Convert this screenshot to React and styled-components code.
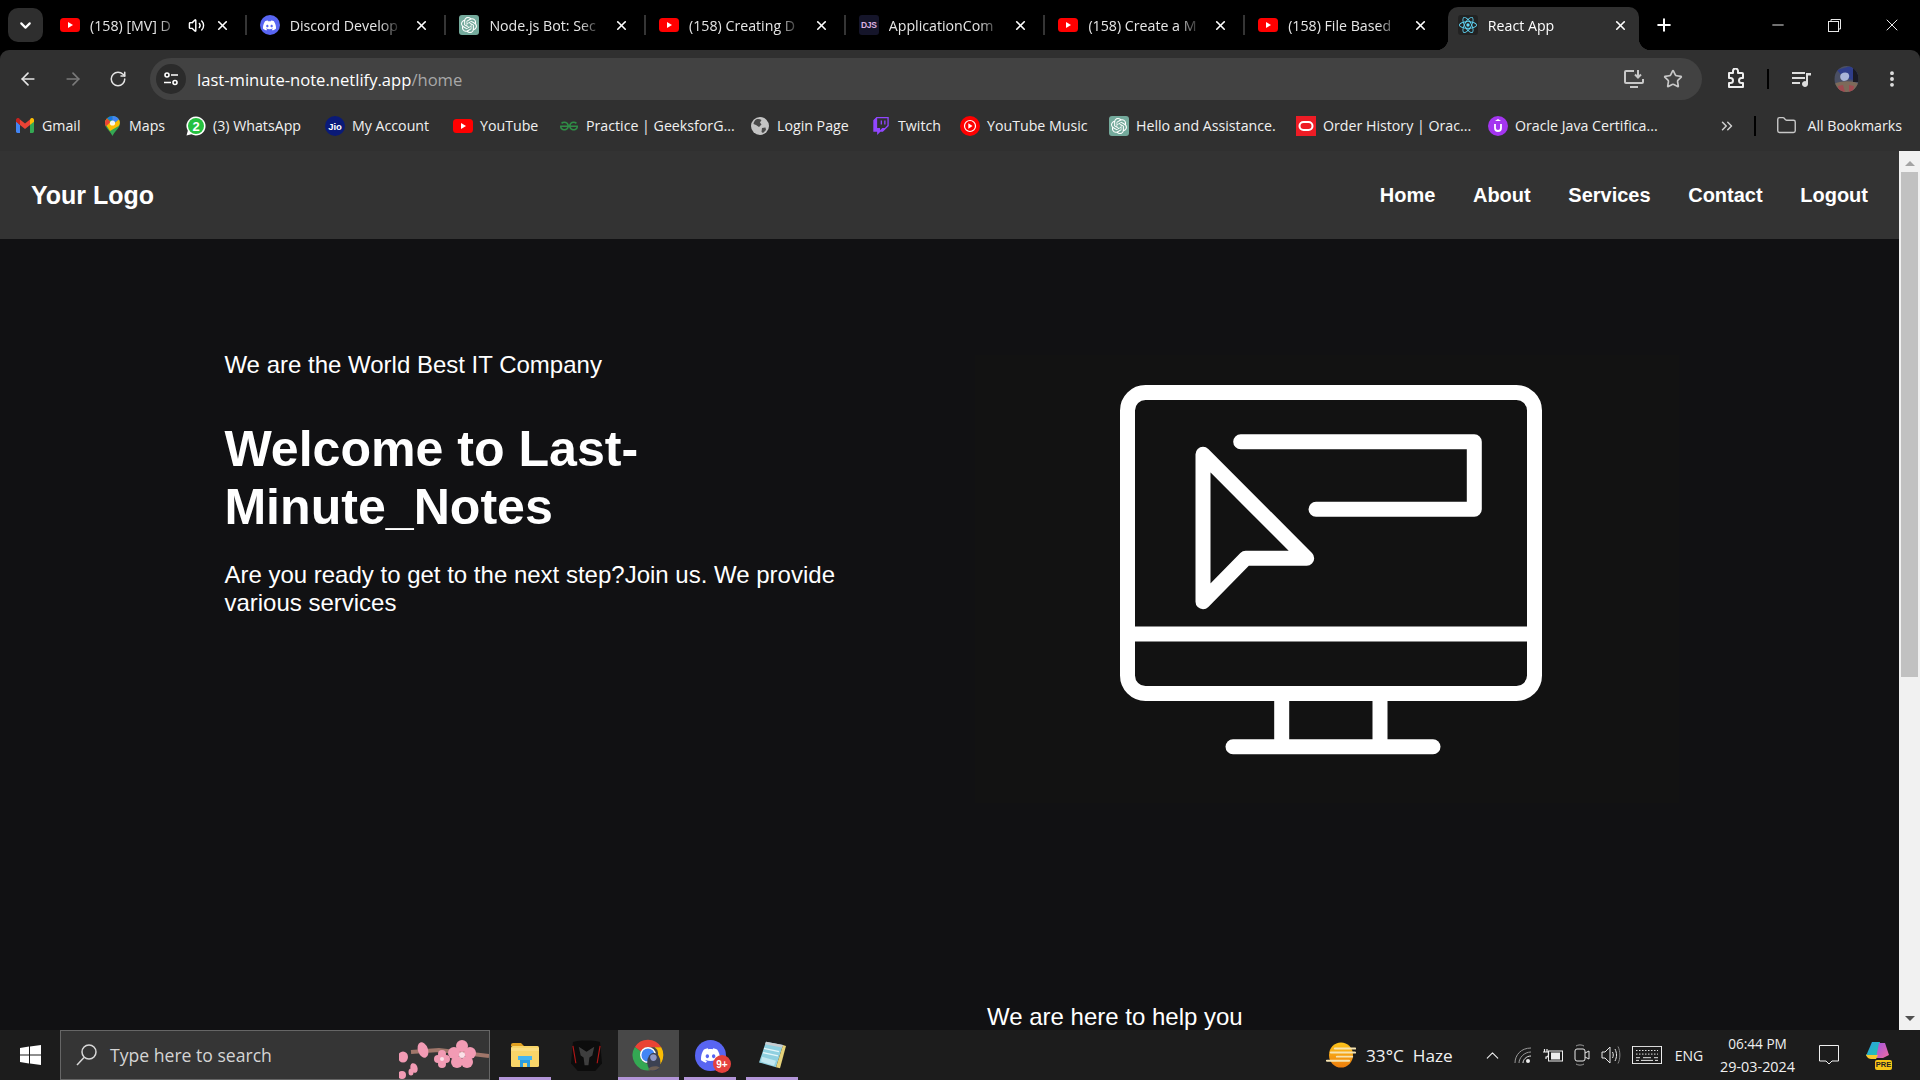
import React from "react";
import styled, { createGlobalStyle } from "styled-components";
import { ArrowLeft, ArrowRight, RotateCw, Star, EllipsisVertical, ChevronDown, ChevronUp, ChevronsRight, Plus, X, Minus, Volume2, Folder } from "lucide-react";
import { SiDiscord, SiOpenai, SiTwitch, SiGeeksforgeeks, SiReact } from "react-icons/si";

const Global = createGlobalStyle`
  html, body { margin: 0; padding: 0; background: #000; overflow: hidden; }
  * { box-sizing: border-box; }
`;

const UI = `"Open Sans", "Noto Sans", sans-serif`;
const WEB = `"Liberation Sans", Arial, sans-serif`;

const Screen = styled.div`
  width: 1920px; height: 1080px; display: flex; flex-direction: column; overflow: hidden; background: #000;
`;

/* ---------- tab strip ---------- */
const TabStrip = styled.div`
  height: 50px; flex: none; display: flex; align-items: center; padding-left: 8px; background: #000; color: #fff;
`;
const TabListButton = styled.div`
  width: 35px; height: 34px; margin-right: 5px; flex: none; display: flex; align-items: center; justify-content: center;
  background: #2e2e2e; border-radius: 10px; color: #fff;
`;
const Tab = styled.div`
  position: relative; width: 199.7px; height: 50px; flex: none; display: flex; align-items: center; padding: 0 17.5px 0 12px;
  font: 14.2px ${UI}; color: ${p => (p.$active ? "#fff" : "#e6e6e6")};
  &::after {
    content: ""; display: ${p => (p.$last ? "none" : "block")}; position: absolute; right: 1px; top: 15px; width: 2px; height: 20px; background: #353535;
  }
`;
const ActiveShape = styled.div`
  position: absolute; left: 2px; right: 6.7px; top: 7px; bottom: 0; background: #303030; border-radius: 10px 10px 0 0;
  &::before, &::after {
    content: ""; position: absolute; bottom: 0; width: 12px; height: 12px;
  }
  &::before { left: -12px; background: radial-gradient(circle at 0 0, transparent 12px, #303030 12.5px); }
  &::after { right: -12px; background: radial-gradient(circle at 100% 0, transparent 12px, #303030 12.5px); }
`;
const FavSlot = styled.span`
  position: relative; width: 20px; height: 20px; flex: none; margin-right: 10px; display: flex; align-items: center; justify-content: center;
`;
const TabTitle = styled.span`
  position: relative; flex: 1; min-width: 0; overflow: hidden; white-space: nowrap;
  -webkit-mask-image: linear-gradient(to right, #000 calc(100% - 22px), transparent 100%);
  mask-image: linear-gradient(to right, #000 calc(100% - 22px), transparent 100%);
`;
const AudioSlot = styled.span`
  position: relative; flex: none; display: flex; align-items: center; justify-content: center; width: 20px; margin: 0 -4px 0 6px; color: #fff;
`;
const CloseSlot = styled.span`
  position: relative; flex: none; display: flex; align-items: center; justify-content: center; width: 16px; margin-left: 12px; color: #fff;
`;
const NewTab = styled.div`
  width: 36px; flex: none; display: flex; justify-content: center; color: #fff;
`;
const WindowControls = styled.div`
  margin-left: auto; display: flex; color: #e8e8e8;
`;
const WindowButton = styled.div`
  width: 57px; display: flex; justify-content: center; align-items: center;
`;

/* ---------- toolbar ---------- */
const Chrome = styled.div`
  flex: none; background: #303030; border-radius: 9px 9px 0 0; color: #fff;
`;
const Toolbar = styled.div`
  height: 58px; display: flex; align-items: center; padding-left: 5px;
`;
const ToolSlot = styled.div`
  width: ${p => p.$w}px; flex: none; display: flex; align-items: center; justify-content: center; color: ${p => p.$color || "#e4e4e4"};
`;
const AddressBar = styled.div`
  width: 1551.6px; height: 42px; flex: none; margin: 0 14.4px 0 10px; display: flex; align-items: center; padding: 0 19px 0 6px; border-radius: 21px; background: #424242;
`;
const SiteButton = styled.div`
  width: 30px; height: 30px; flex: none; border-radius: 50%; background: #2b2b2b; display: flex; align-items: center; justify-content: center; margin-right: 11px;
`;
const Url = styled.div`
  flex: 1; font: 16.6px ${UI}; color: #fff; white-space: nowrap;
`;
const UrlPath = styled.span`
  color: #a8a8a8;
`;
const AddressActions = styled.div`
  display: flex; align-items: center; gap: 18px; color: #c8c8c8;
`;
const ToolDivider = styled.div`
  width: 2px; height: 20px; background: #000;
`;
const Bookmarks = styled.div`
  height: 43px; padding: 0 0 8px 15px; display: flex; align-items: center; font: 14.2px ${UI}; color: #f0f0f0;
`;
const BookmarkItem = styled.div`
  width: ${p => p.$w}px; flex: none; display: flex; align-items: center; white-space: nowrap;
`;
const BookmarkIcon = styled.span`
  width: 20px; height: 20px; flex: none; margin-right: 7px; display: flex; align-items: center; justify-content: center;
`;
const BookmarkEnd = styled.div`
  margin-left: auto; display: flex; align-items: center; padding-right: 18px;
`;
const BookmarkOverflow = styled.div`
  width: 30px; display: flex; justify-content: center; color: #d0d0d0;
`;
const BookmarkDivider = styled.div`
  width: 2px; height: 20px; background: #000; margin: 0 20px 0 12px;
`;
const AllBookmarks = styled.div`
  display: flex; align-items: center; gap: 10px; color: #c8c8c8;
`;
const AllLabel = styled.span`
  color: #f0f0f0;
`;

/* ---------- viewport ---------- */
const Viewport = styled.div`
  flex: 1; min-height: 0; display: flex; background: #111113;
`;
const Page = styled.div`
  flex: 1; min-width: 0; overflow: hidden; font-family: ${WEB}; color: #fff;
`;
const Navbar = styled.nav`
  height: 88px; display: flex; align-items: center; justify-content: space-between; padding: 0 31px; background: #333;
`;
const Logo = styled.div`
  font-size: 25px; font-weight: 700;
`;
const NavLinks = styled.div`
  display: flex; gap: 37.6px; font-size: 20px; font-weight: 700;
`;
const Hero = styled.section`
  display: flex; align-items: flex-start; padding: 112px 0 0 224.4px;
`;
const HeroText = styled.div`
  width: 627px; flex: none;
`;
const Eyebrow = styled.p`
  margin: 0; font-size: 24px;
`;
const Headline = styled.h1`
  margin: 41px 0 0; font-size: 50.1px; line-height: 58px; font-weight: 700;
`;
const Lead = styled.p`
  margin: 25px 0 0; font-size: 24px; line-height: 28px;
`;
const HeroArt = styled.svg`
  flex: none; margin: 4px 0 0 123.600px; display: block; background: #121212;
`;
const HelpSection = styled.section`
  padding: 199.500px 0 0 987px;
`;
const HelpLine = styled.p`
  margin: 0; font-size: 24px; white-space: nowrap;
`;
const Scrollbar = styled.div`
  width: 21px; flex: none; background: #f1f1f1; display: flex; flex-direction: column; align-items: center; padding-top: 10px;
`;
const ScrollArrow = styled.div`
  width: 0; height: 0; border-left: 5px solid transparent; border-right: 5px solid transparent;
  ${p => (p.$down ? "border-top: 5px solid #505050; margin-top: auto; margin-bottom: 9px;" : "border-bottom: 5px solid #a3a3a3;")}
`;
const ScrollThumb = styled.div`
  width: 17px; height: 505px; margin-top: 6px; background: #c1c1c1;
`;

/* ---------- taskbar ---------- */
const Taskbar = styled.div`
  height: 50px; flex: none; display: flex; align-items: stretch; padding-right: 16px; background: #1c1c1c; color: #f0f0f0; font: 15px ${UI};
`;
const StartButton = styled.div`
  width: 60px; flex: none; display: flex; align-items: center; justify-content: center;
`;
const SearchBox = styled.div`
  position: relative; width: 430px; flex: none; margin-right: 4px; display: flex; align-items: center; gap: 13px; padding-left: 15px;
  background: #353535; border: 1px solid #666; color: #d4d4d4; font-size: 17.6px; overflow: hidden;
`;
const Blossom = styled.svg`
  position: absolute; right: 0; top: 0;
`;
const AppSlot = styled.div`
  position: relative; width: 61.75px; flex: none; display: flex; align-items: center; justify-content: center;
  background: ${p => (p.$active ? "#484848" : "transparent")};
  &::after {
    content: ""; display: ${p => (p.$running ? "block" : "none")}; position: absolute; bottom: 0; height: 3px; background: #b295d8;
    left: ${p => (p.$active ? 0 : 5)}px; right: ${p => (p.$active ? 0 : 5)}px;
  }
`;
const DiscordGlyphOver = styled.span`
  position: absolute; display: flex; color: #fff;
`;
const NineBadge = styled.span`
  position: absolute; right: 10px; bottom: 7px; width: 18px; height: 18px; border-radius: 50%; background: #e5413d; color: #fff; font: 700 10px ${WEB};
  display: flex; align-items: center; justify-content: center;
`;
const Tray = styled.div`
  margin-left: auto; display: flex; align-items: stretch;
`;
const Weather = styled.div`
  width: 151px; display: flex; align-items: center; gap: 10px;
`;
const WeatherText = styled.span`
  white-space: pre; font-size: 17.2px;
`;
const TraySlot = styled.div`
  width: ${p => p.$w}px; flex: none; display: flex; align-items: center; justify-content: center; font-size: ${p => p.$size || 14}px; white-space: nowrap;
`;
const Clock = styled.div`
  width: 97px; flex: none; display: flex; flex-direction: column; align-items: center; justify-content: center; gap: 4px; font-size: 13.6px; line-height: 19px;
`;
const ClockDate = styled.span`
  font-size: 14.4px;
`;

/* ---------- drawn icons ---------- */
const YouTubeIcon = ({ w = 20, h = 14 }) => (
  <svg width={w} height={h} viewBox="0 0 20 14">
    <rect width="20" height="14" rx="3.5" fill="#f00" />
    <path d="M8 4l5 3-5 3z" fill="#fff" />
  </svg>
);
const DiscordRound = styled.span`
  width: 20px; height: 20px; display: flex; align-items: center; justify-content: center; border-radius: 50%; background: #5865f2; color: #fff;
`;
const OpenAISquare = styled.span`
  width: 20px; height: 20px; display: flex; align-items: center; justify-content: center; background: #74aa9c; border-radius: 3px; color: #fff;
`;
const DjsBox = styled.span`
  width: 20px; height: 20px; display: flex; align-items: center; justify-content: center; background: #15152a; border-radius: 3px;
  font: 700 8.5px ${WEB}; letter-spacing: -0.3px; color: #dcb0e0;
`;
const ReactBox = styled.span`
  width: 20px; height: 20px; display: flex; align-items: center; justify-content: center; background: #222; border-radius: 3px; color: #61dafb;
`;
const GmailIcon = () => (
  <svg width="18" height="15" viewBox="0 0 18 15">
    <path d="M0 2.5V13.5c0 .8.6 1.4 1.4 1.4H4V7l-4-4.500z" fill="#4285f4" />
    <path d="M14 15h2.600c.8 0 1.400-.6 1.400-1.400V2.500L14 7z" fill="#34a853" />
    <path d="M14 1.500V7l4-3.300V2c0-1.800-2-2.600-3.300-1.600z" fill="#fbbc04" />
    <path d="M4 7V1.500L9 5.500l5-4V7L9 11z" fill="#ea4335" />
    <path d="M0 2v1.700L4 7V1.500L3.300.4C2-.6 0 .2 0 2z" fill="#c5221f" />
  </svg>
);
const MapsIcon = () => (
  <svg width="15" height="20" viewBox="0 0 15 20">
    <path d="M7.500 0C3.400 0 0 3.200 0 7.300 0 11.800 5.200 15 7.500 20c2.300-5 7.500-8.200 7.500-12.700C15 3.200 11.600 0 7.500 0z" fill="#34a853" />
    <path d="M2 2.500A7.400 7.400 0 0 1 7.500 0v5z" fill="#1a73e8" />
    <path d="M7.500 0A7.500 7.500 0 0 1 14 3.500L9.500 7 7.500 5z" fill="#4285f4" />
    <path d="M14 3.500c1 2 1.300 4-.4 6.500L5 15 0 7.300c0-2 .8-3.600 2-4.800L5.500 7a2.500 2.500 0 0 0 4 0z" fill="#fbbc04" />
    <path d="M2 2.500 5.500 6 .8 10.500C.2 9.400 0 8.300 0 7.300 0 5.300.8 3.700 2 2.500z" fill="#ea4335" />
    <circle cx="7.500" cy="7" r="2.600" fill="#fff" fillOpacity="0.9" />
  </svg>
);
const WhatsappIcon = () => (
  <svg width="20" height="20" viewBox="0 0 20 20">
    <path d="M10 .5A9.500 9.500 0 0 0 1.800 14.800L.5 19.500l4.900-1.200A9.500 9.500 0 1 0 10 .5z" fill="#fff" />
    <circle cx="10" cy="10" r="8" fill="#25c03f" />
    <text x="10" y="14.500" textAnchor="middle" fontSize="13" fontWeight="700" fontFamily="Liberation Sans" fill="#fff">2</text>
  </svg>
);
const JioIcon = () => (
  <svg width="20" height="20" viewBox="0 0 20 20">
    <circle cx="10" cy="10" r="10" fill="#0a1a78" />
    <text x="10" y="13.500" textAnchor="middle" fontSize="9.500" fontWeight="700" fontFamily="Liberation Sans" fill="#fff">Jio</text>
  </svg>
);
const GlobeIcon = () => (
  <svg width="18" height="18" viewBox="0 0 18 18">
    <circle cx="9" cy="9" r="9" fill="#c4c4c4" />
    <path d="M5 2.500c2-.8 4-.5 5.500.5L9 5.500l1.500 2-2.500 2.500-3-2-2.500-1c.2-2 1.200-3.500 2.500-4.500zM11 11l3.500-.5.500 2.500-3 3-1.500-1z" fill="#4a4a4a" />
  </svg>
);
const YTMusicIcon = () => (
  <svg width="20" height="20" viewBox="0 0 20 20">
    <circle cx="10" cy="10" r="10" fill="#f00" />
    <circle cx="10" cy="10" r="5.500" fill="none" stroke="#fff" strokeWidth="1.200" />
    <path d="M8.300 7.300l4.200 2.700-4.200 2.700z" fill="#fff" />
  </svg>
);
const OracleIcon = () => (
  <svg width="20" height="20" viewBox="0 0 20 20">
    <rect width="20" height="20" fill="#ee1c25" />
    <rect x="3.500" y="6" width="13" height="8" rx="4" fill="none" stroke="#fff" strokeWidth="2" />
  </svg>
);
const UdemyIcon = () => (
  <svg width="20" height="20" viewBox="0 0 20 20">
    <circle cx="10" cy="10" r="10" fill="#a435f0" />
    <path d="M7 8v4a3 3 0 0 0 6 0V8" fill="none" stroke="#fff" strokeWidth="1.800" />
    <path d="M10 3l3 2H7z" fill="#fff" />
  </svg>
);
const SiteTuneIcon = () => (
  <svg width="16" height="16" viewBox="0 0 16 16" fill="none" stroke="#fff" strokeWidth="1.600">
    <circle cx="4" cy="4" r="2" /><path d="M8 4h7M1 11.500h7" /><circle cx="12" cy="11.500" r="2" />
  </svg>
);
const InstallIcon = () => (
  <svg width="22" height="20" viewBox="0 0 22 20" fill="none" stroke="currentColor" strokeWidth="2">
    <path d="M11 2H3a1 1 0 0 0-1 1v10a1 1 0 0 0 1 1h16a1 1 0 0 0 1-1V10" />
    <path d="M7 18h8" />
    <path d="M15 1v7M12 5.500l3 3 3-3" />
  </svg>
);
const PuzzleIcon = () => (
  <svg width="22" height="22" viewBox="0 0 22 22" fill="none" stroke="#eee" strokeWidth="2" strokeLinejoin="round">
    <path d="M4 6h4V4a2.500 2.500 0 0 1 5 0v2h4a1 1 0 0 1 1 1v4h-1.500a2.500 2.500 0 0 0 0 5H18v4H4v-4h1.500a2.500 2.500 0 0 0 0-5H4z" transform="translate(0 -1)" />
  </svg>
);
const MediaIcon = () => (
  <svg width="20" height="18" viewBox="0 0 20 18" fill="#ddd">
    <rect x="0" y="2" width="13" height="2" /><rect x="0" y="7" width="13" height="2" /><rect x="0" y="12" width="8" height="2" />
    <path d="M14 3h5v2.500h-3V14a3 3 0 1 1-2-2.800z" />
  </svg>
);
const Avatar = () => (
  <svg width="25" height="26" viewBox="0 0 25 26">
    <defs>
      <clipPath id="av"><ellipse cx="12.500" cy="13" rx="12" ry="13" /></clipPath>
    </defs>
    <g clipPath="url(#av)">
      <rect width="25" height="26" fill="#4a4f63" />
      <path d="M3 4l14-4 8 8-6 6-9-2z" fill="#2f3d8a" />
      <path d="M7 8c3-2 7-2 8 1s-2 6-5 6-5-4-3-7z" fill="#a9b4d8" />
      <path d="M0 18c6-3 18-4 25 0v8H0z" fill="#7d6a5a" />
      <path d="M4 20l5-1 2 7H5zM15 19l5 1-1 6h-4z" fill="#a04a50" />
      <path d="M19 0h6v16h-6z" fill="#1a1a24" />
    </g>
  </svg>
);
const WindowsLogo = () => (
  <svg width="21" height="20" viewBox="0 0 21 20" fill="#fff">
    <path d="M0 2.900 9 1.600V9.500H0zM10 1.400 21 0V9.500H10zM0 10.500H9V18.400L0 17.100zM10 10.500H21V20L10 18.600z" />
  </svg>
);
const SearchGlyph = () => (
  <svg width="21" height="22" viewBox="0 0 21 22" fill="none" stroke="#d8d8d8" strokeWidth="1.500">
    <circle cx="13" cy="8" r="7" /><path d="M8 13.500 1 21" />
  </svg>
);
const BlossomArt = () => (
  <Blossom width="90" height="48" viewBox="400 1031 90 48">
    <path d="M412 1052 L440 1050 L490 1056" stroke="#a0766a" strokeWidth="4" fill="none" />
    <g fill="#f29bb4">
      <circle cx="463" cy="1046" r="6" /><circle cx="455" cy="1053" r="6" /><circle cx="471" cy="1053" r="6" /><circle cx="458" cy="1062" r="6" /><circle cx="468" cy="1062" r="6" />
      <circle cx="443" cy="1054" r="4" /><circle cx="439" cy="1059" r="4" /><circle cx="447" cy="1059" r="4" /><circle cx="443" cy="1064" r="4" />
      <ellipse cx="424" cy="1050" rx="5" ry="8" transform="rotate(-20 424 1050)" /><ellipse cx="404" cy="1057" rx="5" ry="5.500" />
      <ellipse cx="415" cy="1068" rx="3.500" ry="5" transform="rotate(-20 415 1068)" /><ellipse cx="403" cy="1075" rx="4" ry="4" />
      <ellipse cx="412" cy="1072" rx="2.500" ry="3.500" />
    </g>
    <circle cx="463" cy="1055" r="3" fill="#fbe0e8" /><circle cx="443" cy="1059" r="2" fill="#fbe0e8" />
  </Blossom>
);
const FolderApp = () => (
  <svg width="28" height="24" viewBox="0 0 28 24">
    <path d="M0 2a2 2 0 0 1 2-2h8l3 3H0z" fill="#e0a020" />
    <rect y="3" width="28" height="21" rx="1.500" fill="#f8d568" />
    <rect y="5" width="28" height="3" fill="#fbe08a" opacity="0.7" />
    <path d="M9 16h10v8h-3v-4h-4v4H9z" fill="#2c9de0" />
    <rect x="7" y="13" width="14" height="4" fill="#44b5f0" />
  </svg>
);
const PredatorApp = () => (
  <svg width="31" height="31" viewBox="0 0 32 32">
    <path d="M2 2C10 0 22 0 30 2l2 22-7 8H7l-7-8z" fill="#0c0c0c" />
    <path d="M2 6 5 24M30 6 27 24" stroke="#b01616" strokeWidth="1.200" fill="none" />
    <path d="M8 7l8 5 8-5-2 9-3 2-1 8h-4l-1-8-3-2z" fill="#3e3e3e" />
  </svg>
);
const ChromeApp = () => (
  <svg width="32" height="32" viewBox="2 2 44 44">
    <path d="M24 3a21 21 0 0 1 18.200 10.500H24a10.500 10.500 0 0 0-9.500 6L6 13A21 21 0 0 1 24 3z" fill="#ea4335" />
    <path d="M42.200 13.500A21 21 0 0 1 26 45l9-15.500a10.500 10.500 0 0 0-2-16z" fill="#fbbc04" />
    <path d="M6 13a21 21 0 0 0 20 32l9-15.500A10.500 10.500 0 0 1 14.500 19.500z" fill="#34a853" />
    <circle cx="24" cy="24" r="10" fill="#4285f4" stroke="#fff" strokeWidth="2" />
    <ellipse cx="32" cy="34" rx="9" ry="13" fill="#3c4152" />
    <path d="M28 24c3-2 8-1 8 3s-3 6-6 5-4-6-2-8z" fill="#8f97c4" />
    <path d="M24 44c2-5 12-6 16-3-3 4-10 6-16 3z" fill="#6d5f55" />
  </svg>
);
const DiscordApp = () => (
  <svg width="31" height="31" viewBox="0 0 30 30"><circle cx="15" cy="15" r="15" fill="#5865f2" /></svg>
);
const NotepadApp = () => (
  <svg width="28" height="28" viewBox="0 0 28 34" preserveAspectRatio="none">
    <path d="M8 1l17 4-7 27L1 26z" fill="#8fd0e0" />
    <path d="M18 32l7-27 3 1-6 27z" fill="#e6d27a" />
    <path d="M8 1l17 4-1 3L7 4z" fill="#c8ccd0" />
    <path d="M6 9l15 4M5 14l15 4" stroke="#e4f6fa" strokeWidth="1.500" />
    <path d="M4 19l14 5-2 6-13-5z" fill="#cfeef5" opacity="0.8" />
  </svg>
);
const WeatherIcon = () => (
  <svg width="30" height="26" viewBox="0 0 30 32" preserveAspectRatio="none">
    <defs><linearGradient id="sun" x1="0" y1="0" x2="0" y2="1"><stop offset="0" stopColor="#fcc419" /><stop offset="1" stopColor="#ee7d0d" /></linearGradient></defs>
    <ellipse cx="15" cy="16" rx="12" ry="15.500" fill="url(#sun)" />
    <g stroke="#f6e3b0" strokeWidth="2.400" strokeLinecap="round">
      <path d="M9 8h20M5 13h24M11 18h15M1 23h22" />
    </g>
  </svg>
);
const Wifi = () => (
  <svg width="18" height="17" viewBox="0 0 18 17" fill="none" stroke="#9a9a9a" strokeWidth="1">
    <path d="M1 16C1 8 7 1 17 1" /><path d="M5 16c0-5 5-11 12-11" /><path d="M9 16c0-3 3-7 8-7" stroke="#e0e0e0" />
    <circle cx="14" cy="14" r="2" fill="#eee" stroke="none" />
  </svg>
);
const Battery = () => (
  <svg width="20" height="16" viewBox="0 0 20 16" fill="none" stroke="#eee" strokeWidth="1">
    <path d="M4 2v3M1.500 2v3" strokeWidth="1.200" /><path d="M0 5h5.500v2.500A2.500 2.500 0 0 1 3 10v2" strokeWidth="1.200" />
    <rect x="5.500" y="4" width="14" height="10" /><rect x="8" y="5.500" width="9" height="7" fill="#eee" stroke="none" />
  </svg>
);
const Camera = () => (
  <svg width="16" height="22" viewBox="0 0 16 22" fill="none" stroke="#e8e8e8" strokeWidth="1">
    <rect x="1" y="5" width="10" height="12" rx="2" /><path d="M11 9l4-2v8l-4-2" />
    <path d="M2 2c2-1.500 6-1.500 8 0M2 20c2 1.500 6 1.500 8 0" stroke="#999" />
  </svg>
);
const Speaker = () => (
  <svg width="20" height="20" viewBox="0 0 20 20" fill="none" stroke="#e8e8e8" strokeWidth="1">
    <path d="M1 7h3l5-5v16l-5-5H1z" /><path d="M11.500 7c1 2 1 4 0 6M14 4c2 4 2 8 0 12" /><path d="M17 1.500c2.500 5 2.500 12 0 17" stroke="#888" />
  </svg>
);
const KeyboardGlyph = () => (
  <svg width="30" height="18" viewBox="0 0 30 20" preserveAspectRatio="none" fill="none" stroke="#eee" strokeWidth="1">
    <rect x=".5" y=".5" width="29" height="19" />
    <path d="M4 5h22" strokeDasharray="1.500 1.500" /><path d="M4 9h22" strokeDasharray="1.500 1.500" /><path d="M4 13h4M11 13h8M22 13h4M4 16h3M9 16h12M23 16h3" />
  </svg>
);
const NotifyGlyph = () => (
  <svg width="20" height="20" viewBox="0 0 20 20" fill="none" stroke="#f0f0f0" strokeWidth="1">
    <path d="M.5.5h19v15.500h-6.500L10 19l-3-3H.5z" />
  </svg>
);
const CopilotIcon = () => (
  <svg width="26" height="26" viewBox="0 0 26 26">
    <defs>
      <linearGradient id="cp1" x1="0" y1="0" x2="1" y2="1"><stop offset="0" stopColor="#2f9be8" /><stop offset="1" stopColor="#1fc8a8" /></linearGradient>
      <linearGradient id="cp2" x1="0" y1="0" x2="1" y2="1"><stop offset="0" stopColor="#a056e0" /><stop offset="1" stopColor="#f06aa0" /></linearGradient>
    </defs>
    <path d="M7 2h8l-3 14H1z" fill="url(#cp1)" />
    <path d="M14 3h6l4 12-6 3h-7z" fill="url(#cp2)" />
    <path d="M1 14c0 2 2 5 5 5h5l2-4H2z" fill="#f6c830" />
  </svg>
);
const CopilotWrap = styled.span`
  position: relative; width: 26px; height: 30px; display: block;
`;
const PreBadge = styled.span`
  position: absolute; right: -1px; bottom: 0; width: 17px; height: 10px; background: #f5c518; color: #222; border-radius: 2px; font: 700 7.5px/10px ${WEB}; text-align: center;
`;

/* ---------- data ---------- */
const tabs = [
  { icon: <YouTubeIcon />, title: "(158) [MV] D", audio: true },
  { icon: <DiscordRound><SiDiscord size={13} /></DiscordRound>, title: "Discord Develop" },
  { icon: <OpenAISquare><SiOpenai size={16} /></OpenAISquare>, title: "Node.js Bot: Sec" },
  { icon: <YouTubeIcon />, title: "(158) Creating D" },
  { icon: <DjsBox>DJS</DjsBox>, title: "ApplicationCom" },
  { icon: <YouTubeIcon />, title: "(158) Create a M" },
  { icon: <YouTubeIcon />, title: "(158) File Based" },
  { icon: <ReactBox><SiReact size={18} /></ReactBox>, title: "React App", active: true },
];
const bookmarks = [
  { w: 87, icon: <GmailIcon />, label: "Gmail" },
  { w: 84, icon: <MapsIcon />, label: "Maps" },
  { w: 139, icon: <WhatsappIcon />, label: "(3) WhatsApp" },
  { w: 128, icon: <JioIcon />, label: "My Account" },
  { w: 106, icon: <YouTubeIcon />, label: "YouTube" },
  { w: 191, icon: <SiGeeksforgeeks size={18} color="#2f8d46" />, label: "Practice | GeeksforG..." },
  { w: 121, icon: <GlobeIcon />, label: "Login Page" },
  { w: 89, icon: <SiTwitch size={18} color="#9146ff" />, label: "Twitch" },
  { w: 149, icon: <YTMusicIcon />, label: "YouTube Music" },
  { w: 187, icon: <OpenAISquare><SiOpenai size={16} /></OpenAISquare>, label: "Hello and Assistance." },
  { w: 192, icon: <OracleIcon />, label: "Order History | Orac..." },
  { w: 180, icon: <UdemyIcon />, label: "Oracle Java Certifica..." },
];

export default function App() {
  return (
    <Screen>
      <Global />
      <TabStrip>
        <TabListButton><ChevronDown size={17} strokeWidth={3} /></TabListButton>
        {tabs.map((t, i) => (
          <Tab key={i} $active={t.active} $last={t.active || i === tabs.length - 2}>
            {t.active && <ActiveShape />}
            <FavSlot>{t.icon}</FavSlot>
            <TabTitle>{t.title}</TabTitle>
            {t.audio && <AudioSlot><Volume2 size={17} /></AudioSlot>}
            <CloseSlot><X size={15} strokeWidth={2.6} /></CloseSlot>
          </Tab>
        ))}
        <NewTab><Plus size={20} strokeWidth={2.4} /></NewTab>
        <WindowControls>
          <WindowButton><Minus size={18} strokeWidth={1.3} /></WindowButton>
          <WindowButton>
            <svg width="13" height="13" viewBox="0 0 13 13" fill="none" stroke="currentColor"><rect x=".5" y="2.500" width="10" height="10" /><path d="M3 2.500V.5h9.500V10h-2" /></svg>
          </WindowButton>
          <WindowButton><X size={20} strokeWidth={1.2} /></WindowButton>
        </WindowControls>
      </TabStrip>

      <Chrome>
        <Toolbar>
          <ToolSlot $w={45}><ArrowLeft size={20} strokeWidth={2} /></ToolSlot>
          <ToolSlot $w={45} $color="#7a7a7a"><ArrowRight size={20} strokeWidth={2} /></ToolSlot>
          <ToolSlot $w={45}><RotateCw size={18} strokeWidth={2} /></ToolSlot>
          <AddressBar>
            <SiteButton><SiteTuneIcon /></SiteButton>
            <Url>last-minute-note.netlify.app<UrlPath>/home</UrlPath></Url>
            <AddressActions>
              <InstallIcon />
              <Star size={20} strokeWidth={2} />
            </AddressActions>
          </AddressBar>
          <ToolSlot $w={40}><PuzzleIcon /></ToolSlot>
          <ToolSlot $w={25}><ToolDivider /></ToolSlot>
          <ToolSlot $w={42}><MediaIcon /></ToolSlot>
          <ToolSlot $w={48}><Avatar /></ToolSlot>
          <ToolSlot $w={42}><EllipsisVertical size={20} strokeWidth={2.6} /></ToolSlot>
        </Toolbar>
        <Bookmarks>
          {bookmarks.map(b => (
            <BookmarkItem key={b.label} $w={b.w}>
              <BookmarkIcon>{b.icon}</BookmarkIcon>
              {b.label}
            </BookmarkItem>
          ))}
          <BookmarkEnd>
            <BookmarkOverflow><ChevronsRight size={18} /></BookmarkOverflow>
            <BookmarkDivider />
            <AllBookmarks>
              <Folder size={21} strokeWidth={1.6} />
              <AllLabel>All Bookmarks</AllLabel>
            </AllBookmarks>
          </BookmarkEnd>
        </Bookmarks>
      </Chrome>

      <Viewport>
        <Page>
          <Navbar>
            <Logo>Your Logo</Logo>
            <NavLinks>
              <span>Home</span><span>About</span><span>Services</span><span>Contact</span><span>Logout</span>
            </NavLinks>
          </Navbar>
          <Hero>
            <HeroText>
              <Eyebrow>We are the World Best IT Company</Eyebrow>
              <Headline>Welcome to Last-Minute_Notes</Headline>
              <Lead>Are you ready to get to the next step?Join us. We provide various services</Lead>
            </HeroText>
            <HeroArt width="704" height="448" viewBox="975 355 704 448" fill="none" stroke="#fff" strokeWidth="15" strokeLinecap="round" strokeLinejoin="round">
              <rect x="1127.500" y="392.500" width="407" height="301" rx="18" />
              <path d="M1127.500 634H1534.500" strokeLinecap="butt" />
              <path d="M1281.700 701V740M1380 701V740" strokeLinecap="butt" />
              <path d="M1233 746.700H1433" />
              <path d="M1203 454.300L1306.700 558.300H1245.700L1203 601.700Z" />
              <path d="M1240.700 441.700H1474.300V509.300H1316" />
            </HeroArt>
          </Hero>
          <HelpSection>
            <HelpLine>We are here to help you</HelpLine>
          </HelpSection>
        </Page>
        <Scrollbar>
          <ScrollArrow />
          <ScrollThumb />
          <ScrollArrow $down />
        </Scrollbar>
      </Viewport>

      <Taskbar>
        <StartButton><WindowsLogo /></StartButton>
        <SearchBox>
          <SearchGlyph />
          <span>Type here to search</span>
          <BlossomArt />
        </SearchBox>
        <AppSlot $running><FolderApp /></AppSlot>
        <AppSlot><PredatorApp /></AppSlot>
        <AppSlot $running $active><ChromeApp /></AppSlot>
        <AppSlot $running><DiscordApp /><DiscordGlyphOver><SiDiscord size={19} /></DiscordGlyphOver><NineBadge>9+</NineBadge></AppSlot>
        <AppSlot $running><NotepadApp /></AppSlot>
        <Tray>
          <Weather><WeatherIcon /><WeatherText>33°C  Haze</WeatherText></Weather>
          <TraySlot $w={30}><ChevronUp size={21} strokeWidth={1.2} /></TraySlot>
          <TraySlot $w={31}><Wifi /></TraySlot>
          <TraySlot $w={29}><Battery /></TraySlot>
          <TraySlot $w={30}><Camera /></TraySlot>
          <TraySlot $w={28}><Speaker /></TraySlot>
          <TraySlot $w={44}><KeyboardGlyph /></TraySlot>
          <TraySlot $w={40} $size={14}>ENG</TraySlot>
          <Clock><span>06:44 PM</span><ClockDate>29-03-2024</ClockDate></Clock>
          <TraySlot $w={46}><NotifyGlyph /></TraySlot>
          <TraySlot $w={52}><CopilotWrap><CopilotIcon /><PreBadge>PRE</PreBadge></CopilotWrap></TraySlot>
        </Tray>
      </Taskbar>
    </Screen>
  );
}
